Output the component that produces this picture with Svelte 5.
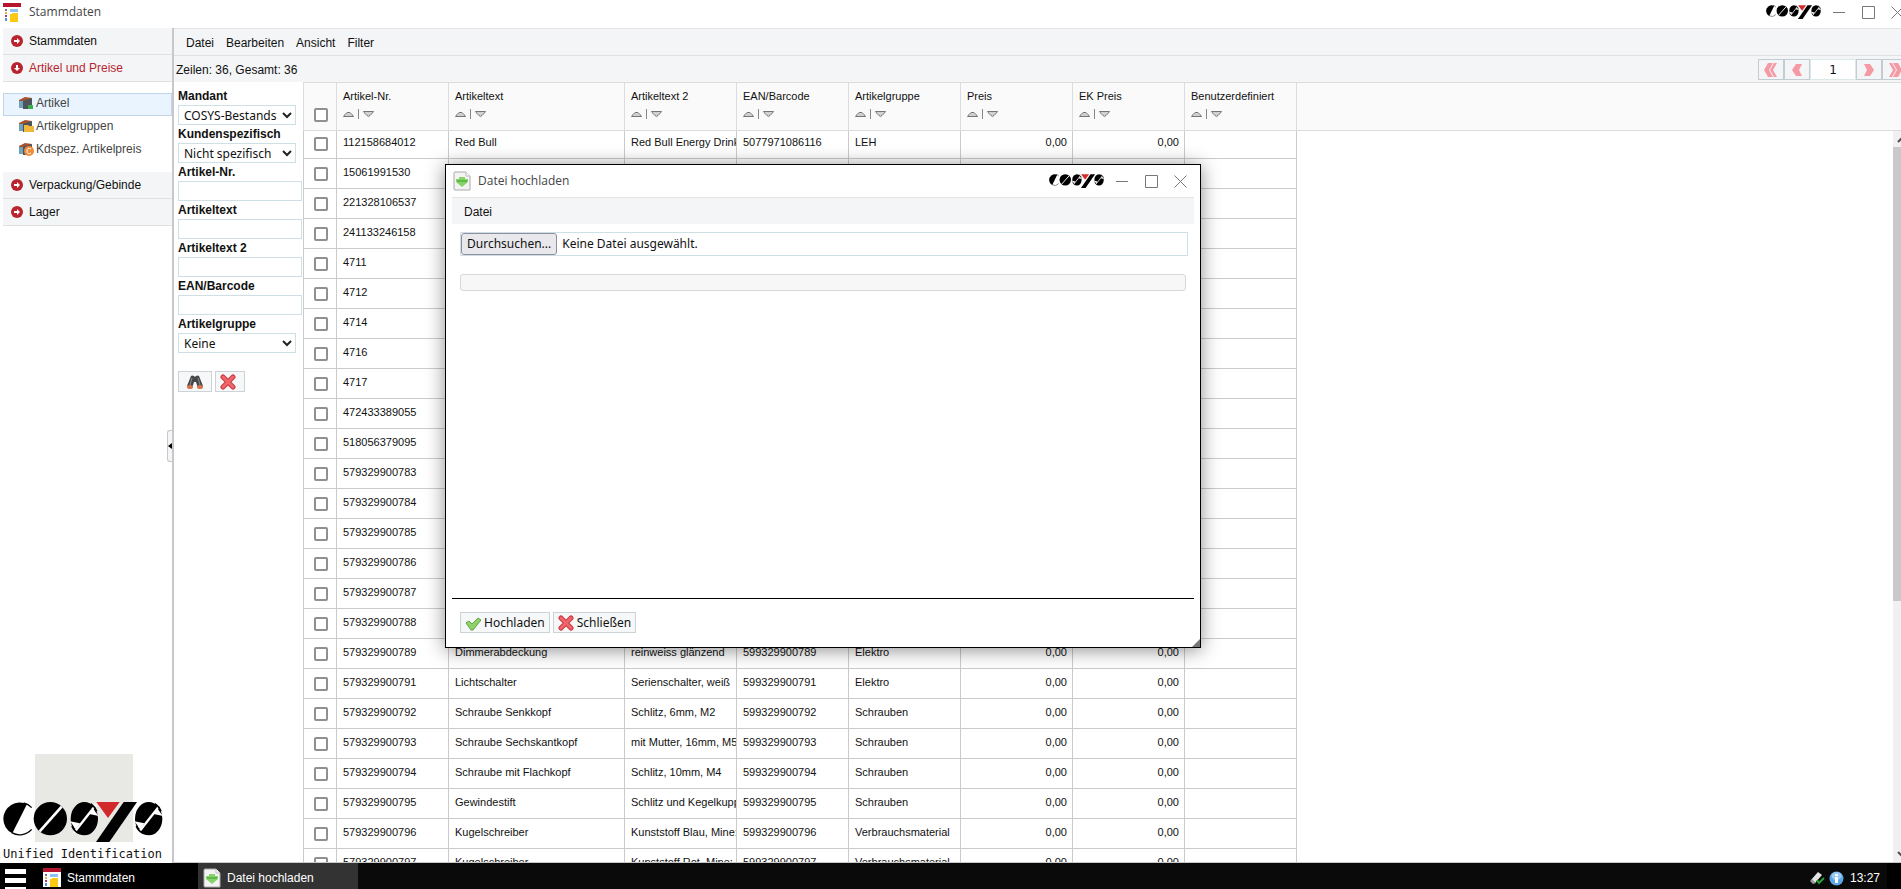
<script>
  const sections = [
    { label: "Stammdaten" },
    {
      label: "Artikel und Preise",
      open: true,
      items: [
        { label: "Artikel", kind: "box", selected: true },
        { label: "Artikelgruppen", kind: "folder" },
        { label: "Kdspez. Artikelpreis", kind: "price" },
      ],
    },
    { label: "Verpackung/Gebinde" },
    { label: "Lager" },
  ];

  const menu = ["Datei", "Bearbeiten", "Ansicht", "Filter"];

  const filters = [
    { id: "mandant", label: "Mandant", options: ["COSYS-Bestandsführung"] },
    { id: "kunde", label: "Kundenspezifisch", options: ["Nicht spezifisch"] },
    { id: "nr", label: "Artikel-Nr." },
    { id: "text", label: "Artikeltext" },
    { id: "text2", label: "Artikeltext 2" },
    { id: "ean", label: "EAN/Barcode" },
    { id: "gruppe", label: "Artikelgruppe", options: ["Keine"] },
  ];

  const columns = [
    { key: "nr", label: "Artikel-Nr." },
    { key: "text", label: "Artikeltext", wide: true },
    { key: "text2", label: "Artikeltext 2" },
    { key: "ean", label: "EAN/Barcode" },
    { key: "group", label: "Artikelgruppe" },
    { key: "price", label: "Preis", number: true },
    { key: "ekPrice", label: "EK Preis", number: true },
    { key: "custom", label: "Benutzerdefiniert" },
  ];

  const rows = [
    ["112158684012", "Red Bull", "Red Bull Energy Drink", "5077971086116", "LEH"],
    ["15061991530"],
    ["221328106537"],
    ["241133246158"],
    ["4711"],
    ["4712"],
    ["4714"],
    ["4716"],
    ["4717"],
    ["472433389055"],
    ["518056379095"],
    ["579329900783"],
    ["579329900784"],
    ["579329900785"],
    ["579329900786"],
    ["579329900787"],
    ["579329900788"],
    ["579329900789", "Dimmerabdeckung", "reinweiss glänzend", "599329900789", "Elektro"],
    ["579329900791", "Lichtschalter", "Serienschalter, weiß", "599329900791", "Elektro"],
    ["579329900792", "Schraube Senkkopf", "Schlitz, 6mm, M2", "599329900792", "Schrauben"],
    ["579329900793", "Schraube Sechskantkopf", "mit Mutter, 16mm, M5", "599329900793", "Schrauben"],
    ["579329900794", "Schraube mit Flachkopf", "Schlitz, 10mm, M4", "599329900794", "Schrauben"],
    ["579329900795", "Gewindestift", "Schlitz und Kegelkupp", "599329900795", "Schrauben"],
    ["579329900796", "Kugelschreiber", "Kunststoff Blau, Mine:", "599329900796", "Verbrauchsmaterial"],
    ["579329900797", "Kugelschreiber", "Kunststoff Rot, Mine:", "599329900797", "Verbrauchsmaterial"],
  ].map(([nr, text = "", text2 = "", ean = "", group = ""]) => ({
    nr, text, text2, ean, group, price: "0,00", ekPrice: "0,00", custom: "",
  }));

  let fileName = $state("Keine Datei ausgewählt.");
  let page = $state("1");

  function pickFile(event) {
    fileName = event.target.files[0]?.name ?? "Keine Datei ausgewählt.";
  }
</script>

{#snippet letterS(x)}
  <g transform="translate({x} 0)">
    <ellipse cx="41" cy="50" rx="41" ry="50" />
    <path d="M76 8 L10 92" stroke="#fff" stroke-width="7" />
    <path d="M-2 58 L28 64 L16 82 Q10 78 7 70z" fill="#fff" />
    <path d="M84 42 L56 36 L66 20 Q72 24 75 31z" fill="#fff" />
    <path d="M4 72 Q9 86 24 94 M78 28 Q73 14 60 5" fill="none" stroke="#000" stroke-width="5" />
  </g>
{/snippet}

{#snippet logo()}
  <svg class="logo" viewBox="0 0 480 120" role="img" aria-label="COSYS">
    <path d="M72 6 A50 50 0 0 0 1 50 A50 50 0 0 0 28 94z" />
    <path d="M26 92 A48 48 0 0 0 86 82 M62 3 Q76 6 86 17" fill="none" stroke="#000" stroke-width="4" />
    <ellipse cx="142" cy="50" rx="50" ry="50" />
    <path d="M176 14 L110 88" stroke="#fff" stroke-width="8" />
    {@render letterS(203)}
    <path d="M280 0 H350 L315 48z" fill="#d22a2c" />
    <path d="M362 0 H402 L319 120 H279z" />
    {@render letterS(396)}
  </svg>
{/snippet}

{#snippet appIcon()}
  <svg width="18" height="19" viewBox="0 0 18 19" aria-hidden="true">
    <path d="M0 0h18v19H0z" fill="#fff" />
    <path d="M0 0h18v4H0z" fill="#b5152f" />
    <path d="M2 6h2v2H2z" fill="#777" />
    <path d="M2 9h2v2H2z" fill="#e3b04b" />
    <path d="M2 12h2v2H2z" fill="#a33c6a" />
    <path d="M2 15h2v3H2z" fill="#5b8fd8" />
    <path d="M7 6h8v3H7z" fill="#8cc3f2" />
    <path d="M7 11h2V10h6v9H7z" fill="#fbc916" />
  </svg>
{/snippet}

{#snippet uploadIcon()}
  <svg width="18" height="20" viewBox="0 0 18 20" aria-hidden="true">
    <path d="M2 1h11l4 4v14H2a1 1 0 0 1-1-1V2a1 1 0 0 1 1-1z" fill="#f3f3f6" stroke="#aaa" />
    <path d="M13 1v4h4" fill="#fff" stroke="#bbb" />
    <path d="M6 6h6v2h3v3l-6 5-6-5V8h3z" fill="#86d36a" />
    <path d="M4 10h10" stroke="#5fb848" stroke-width="2" />
  </svg>
{/snippet}

{#snippet windowButtons()}
  <div class="window-buttons">
    {@render logo()}
    <button aria-label="Minimieren"><svg width="13" height="13"><path d="M0 6.5h12" /></svg></button>
    <button aria-label="Maximieren"><svg width="13" height="13"><path d="M.5.5h12v12H.5z" /></svg></button>
    <button aria-label="Fenster schließen"><svg width="13" height="13"><path d="M.5.5l12 12M12.5.5l-12 12" /></svg></button>
  </div>
{/snippet}

{#snippet crossIcon()}
  <svg width="16" height="16" viewBox="0 0 16 16" aria-hidden="true">
    <path d="M3 3 L13 13 M13 3 L3 13" stroke="#c8383e" stroke-width="5" stroke-linecap="round" />
    <path d="M3 3 L13 13 M13 3 L3 13" stroke="#f0656b" stroke-width="3" stroke-linecap="round" />
  </svg>
{/snippet}

{#snippet pagerArrow(double, flip)}
  <svg width="14" height="14" viewBox="0 0 14 14" class:flip aria-hidden="true">
    {#if double}
      <path d="M4 0h5L5 7l4 7H4L0 7z M10 0h3L9 7l4 7h-3L6 7z" />
    {:else}
      <path d="M6 1h6L9 7l3 6H6L2 7z" />
    {/if}
  </svg>
{/snippet}

<div class="screen">
  <div class="desktop">
    <header class="titlebar">
      {@render appIcon()}
      <span class="title">Stammdaten</span>
      {@render windowButtons()}
    </header>

    <div class="workspace">
      <aside class="sidebar">
        <nav>
          {#each sections as section}
            <button class="section" class:open={section.open}>
              <svg width="12" height="12" viewBox="0 0 12 12" aria-hidden="true">
                <circle cx="6" cy="6" r="6" fill="#b9252f" />
                {#if section.open}
                  <path d="M5 3h2v3h2L6 9 3 6h2z" fill="#fff" />
                {:else}
                  <path d="M3 5h3V3l3 3-3 3V7H3z" fill="#fff" />
                {/if}
              </svg>
              {section.label}
            </button>
            {#if section.items}
              <div class="section-items">
                {#each section.items as item}
                  <a href="#{item.kind}" class="entry" class:selected={item.selected}>
                    <svg width="15" height="14" viewBox="0 0 15 14" aria-hidden="true">
                      <path d="M0 4 L6 1 13 2 9 6 0 7z" fill="#a5532f" />
                      <path d="M0 5h4v7H0z" fill="#6fa3bd" />
                      <path d="M4 5l9-3v11H4z" fill="#4d555b" />
                      {#if item.kind === "box"}
                        <path d="M9 9h5v4H9z" fill="#35b14a" />
                      {:else if item.kind === "folder"}
                        <path d="M5 6h4l1 1h5v6H5z" fill="#f0b73c" />
                      {:else}
                        <circle cx="10" cy="9" r="5" fill="#f08a35" />
                        <path d="M12 7q-4-2-4 2t4 2" fill="none" stroke="#fff" />
                      {/if}
                    </svg>
                    {item.label}
                  </a>
                {/each}
              </div>
            {/if}
          {/each}
        </nav>
        <button class="collapse" aria-label="Navigation einklappen">
          <svg width="4" height="6"><path d="M4 0v6L0 3z" /></svg>
        </button>
        <div class="brand">
          {@render logo()}
          <span>Unified Identification</span>
        </div>
      </aside>

      <main>
        <div class="menubar">
          {#each menu as entry}
            <button>{entry}</button>
          {/each}
        </div>

        <div class="infobar">
          <span>Zeilen: 36, Gesamt: 36</span>
          <div class="pager">
            <button aria-label="Erste Seite">{@render pagerArrow(true, false)}</button>
            <button aria-label="Vorherige Seite">{@render pagerArrow(false, false)}</button>
            <input type="text" aria-label="Seite" bind:value={page} />
            <button aria-label="Nächste Seite">{@render pagerArrow(false, true)}</button>
            <button aria-label="Letzte Seite">{@render pagerArrow(true, true)}</button>
          </div>
        </div>

        <div class="content">
          <form class="filters">
            {#each filters as filter}
              <label for={filter.id}>{filter.label}</label>
              {#if filter.options}
                <div class="select">
                  <select id={filter.id}>
                    {#each filter.options as option}
                      <option>{option}</option>
                    {/each}
                  </select>
                  <svg width="10" height="7" viewBox="0 0 10 7" aria-hidden="true">
                    <path d="M1 1l4 4 4-4" />
                  </svg>
                </div>
              {:else}
                <input type="text" id={filter.id} />
              {/if}
            {/each}
            <div class="filter-actions">
              <button type="button" class="search" aria-label="Suchen">
                <svg width="16" height="16" viewBox="0 0 16 16" aria-hidden="true">
                  <path d="M4 2Q5 1 7 2L8 3 9 2q2-1 3 0l4 10-5 2-2-6H7l-2 6-5-2z" fill="#454648" />
                  <path d="M5 4L3 11M11 4l2 7" stroke="#8d8f92" />
                  <ellipse cx="3" cy="13" rx="3" ry="2" fill="#d9734f" />
                  <ellipse cx="13" cy="13" rx="3" ry="2" fill="#d9734f" />
                </svg>
              </button>
              <button type="button" class="reset" aria-label="Filter löschen">{@render crossIcon()}</button>
            </div>
          </form>

          <div class="grid">
            <table>
              <colgroup>
                <col class="col-check" />
                {#each columns as column}
                  <col class={column.wide ? "col-wide" : "col-normal"} />
                {/each}
                <col />
              </colgroup>
              <thead>
                <tr>
                  <th class="check"><input type="checkbox" aria-label="Alle auswählen" /></th>
                  {#each columns as column}
                    <th>
                      {column.label}
                      <div class="sort">
                        <button aria-label="{column.label} aufsteigend">
                          <svg width="11" height="6"><path d="M.5 5.5L2 3.5 4 1.5h3l2 2 1.5 2z" /></svg>
                        </button>
                        <i></i>
                        <button aria-label="{column.label} absteigend">
                          <svg width="11" height="6"><path d="M.5.5h10L9 2.5l-2 2-1.500 1-1.500-1-2-2z" /></svg>
                        </button>
                      </div>
                    </th>
                  {/each}
                  <th class="filler"></th>
                </tr>
              </thead>
              <tbody>
                {#each rows as row}
                  <tr>
                    <td class="check"><input type="checkbox" aria-label="Artikel {row.nr} auswählen" /></td>
                    {#each columns as column}
                      <td class:number={column.number}>{row[column.key]}</td>
                    {/each}
                    <td class="filler"></td>
                  </tr>
                {/each}
              </tbody>
            </table>
          </div>

          <div class="scrollbar">
            <div class="scroll-head"></div>
            <div class="arrow"><svg width="10" height="7"><path d="M1 6l4-4 4 4" /></svg></div>
            <div class="track"><div class="thumb"></div></div>
            <div class="arrow"><svg width="10" height="7"><path d="M1 1l4 4 4-4" /></svg></div>
          </div>
        </div>
      </main>
    </div>

    <footer class="taskbar">
      <button class="start" aria-label="Menü"><i></i><i></i><i></i></button>
      <button class="task">{@render appIcon()}Stammdaten</button>
      <button class="task active">{@render uploadIcon()}Datei hochladen</button>
      <div class="tray">
        <svg width="15" height="14" viewBox="0 0 15 14" aria-hidden="true">
          <path d="M1 9L8 1l4 3-7 8z" fill="#e4e4e4" />
          <path d="M0 10l3 3 3-1-4-4z" fill="#9a9a9a" />
          <path d="M7 9l2 3 5-5" fill="none" stroke="#28a532" stroke-width="2" />
        </svg>
        <svg width="15" height="15" viewBox="0 0 15 15" aria-hidden="true">
          <circle cx="7.500" cy="7.500" r="7" fill="#5ea7e6" />
          <ellipse cx="7.500" cy="5" rx="5" ry="4" fill="#9bcbf4" />
          <path d="M6 3h3v2H6zM6 6h3v6H6z" fill="#fff" />
        </svg>
        <span class="clock">13:27</span>
      </div>
      <button class="show-desktop" aria-label="Desktop anzeigen"></button>
    </footer>

    <div class="dialog" role="dialog" aria-label="Datei hochladen">
      <div class="dialog-title">
        {@render uploadIcon()}
        <span class="title">Datei hochladen</span>
        {@render windowButtons()}
      </div>
      <div class="menubar"><button>Datei</button></div>
      <div class="dialog-body">
        <div class="file-field">
          <input type="file" id="upload" onchange={pickFile} />
          <label for="upload">Durchsuchen...</label>
          <span>{fileName}</span>
        </div>
        <div class="progress" role="progressbar" aria-label="Fortschritt" aria-valuenow="0"></div>
      </div>
      <div class="dialog-footer">
        <button>
          <svg width="16" height="16" viewBox="0 0 16 16" aria-hidden="true">
            <path d="M1 8l3-2 3 3 6-6 3 2-8 10H6z" fill="#8ed168" stroke="#5fa648" />
          </svg>
          Hochladen
        </button>
        <button>{@render crossIcon()}Schließen</button>
      </div>
      <svg class="grip" width="8" height="8"><path d="M8 0v8H0z" /></svg>
    </div>
  </div>
</div>

<style>
  :global(body) {
    margin: 0;
  }

  .screen {
    height: 100vh;
    overflow: hidden;
    font: 12px/16px "Liberation Sans", Arial, sans-serif;
    color: #111;
    background: #fff;
  }

  /* the window is slightly wider than the viewport */
  .desktop {
    position: relative;
    display: flex;
    flex-direction: column;
    width: calc(100% + 9px);
    height: 100%;
  }

  .screen :global(*) {
    box-sizing: border-box;
  }

  button,
  input,
  select {
    margin: 0;
    padding: 0;
    font: inherit;
    color: inherit;
    border: 0;
    border-radius: 0;
    background: none;
  }

  svg {
    display: block;
    flex: none;
  }

  .titlebar {
    display: flex;
    align-items: center;
    gap: 8px;
    flex: none;
    height: 28px;
    padding: 0 6px 4px 3px;
  }

  .title {
    flex: 1;
    font-family: "Open Sans", "Noto Sans", sans-serif;
    color: #444;
  }

  .window-buttons {
    display: flex;
    align-items: center;
    gap: 16px;
  }

  .window-buttons .logo {
    width: 55px;
    height: 14px;
    margin-right: -4px;
  }

  .window-buttons button path {
    fill: none;
    stroke: #777;
  }

  .workspace {
    display: flex;
    flex: 1;
    min-height: 0;
  }

  .sidebar {
    position: relative;
    display: flex;
    flex-direction: column;
    flex: none;
    width: 174px;
    border-right: 2px solid #c8c8ca;
  }

  nav {
    flex: 1;
    padding-left: 3px;
  }

  .section {
    display: flex;
    align-items: center;
    gap: 6px;
    width: 100%;
    height: 27px;
    padding-left: 8px;
    background: #f4f5f7;
    border-bottom: 1px solid #e0e1e3;
  }

  .section.open {
    color: #b9252f;
  }

  .section-items {
    padding: 11px 0 10px;
  }

  .entry {
    display: flex;
    align-items: center;
    gap: 2px;
    height: 23px;
    padding: 0 0 3px 15px;
    border: 1px solid transparent;
    color: #444;
    text-decoration: none;
  }

  .entry.selected {
    background: #eaf4ff;
    border-color: #c0d5e8;
  }

  .collapse {
    position: absolute;
    top: 50%;
    right: 0;
    display: flex;
    align-items: center;
    width: 5px;
    height: 32px;
    border: 1px solid #c8c8ca;
    border-right: 0;
    border-radius: 3px 0 0 3px;
    background: #f4f5f7;
    transform: translateY(-50%);
  }

  .brand {
    display: flex;
    flex-direction: column;
    padding: 48px 0 0 3px;
    background: linear-gradient(#e8e8e4, #e8e8e4) 35px 0 / 98px 88px no-repeat;
  }

  .brand .logo {
    width: 160px;
    height: 40px;
  }

  .brand span {
    padding: 4px 0 1px;
    font-family: "DejaVu Sans Mono", monospace;
    white-space: nowrap;
  }

  main {
    display: flex;
    flex-direction: column;
    flex: 1;
    min-width: 0;
    border-bottom: 1px solid #c8c8c8;
  }

  .menubar {
    display: flex;
    align-items: center;
    gap: 12px;
    flex: none;
    height: 27px;
    padding: 2px 0 0 12px;
    background: #f4f5f7;
    border-top: 1px solid #e4e4e6;
  }

  .infobar {
    display: flex;
    align-items: center;
    justify-content: space-between;
    flex: none;
    height: 27px;
    padding: 1px 2px 0;
    background: #f4f5f7;
    border-top: 1px solid #e0e1e3;
  }

  .pager {
    display: flex;
    height: 21px;
  }

  .pager button {
    display: flex;
    align-items: center;
    justify-content: center;
    width: 26px;
    border: 1px solid #c3ccd2;
  }

  .pager svg {
    fill: #f59aa4;
  }

  .pager .flip {
    transform: scaleX(-1);
  }

  .pager input {
    width: 46px;
    text-align: center;
    font-family: "DejaVu Sans", sans-serif;
    background: #fff;
    border: 1px solid #dce8ea;
  }

  .content {
    display: flex;
    flex: 1;
    min-height: 0;
    overflow: hidden;
  }

  .filters {
    display: flex;
    flex-direction: column;
    flex: none;
    width: 129px;
    padding: 5px 1px 0 4px;
    font-family: "Noto Sans", sans-serif;
  }

  .filters label {
    font: bold 12px/18px "Liberation Sans", Arial, sans-serif;
  }

  .filters input,
  .filters select {
    width: 100%;
    height: 20px;
    padding: 1px 5px 0;
    border: 1px solid #cfdfe6;
    background: #fff;
  }

  .select {
    display: grid;
    align-items: center;
    margin-right: 6px;
  }

  .filters .select select {
    grid-area: 1 / 1;
    appearance: none;
    padding-right: 18px;
  }

  .select svg {
    grid-area: 1 / 1;
    justify-self: end;
    margin-right: 4px;
    pointer-events: none;
    fill: none;
    stroke: #222;
    stroke-width: 2;
  }

  .filter-actions {
    display: flex;
    gap: 3px;
    margin-top: 18px;
  }

  .filter-actions button,
  .dialog-footer button {
    display: flex;
    align-items: center;
    justify-content: center;
    gap: 3px;
    height: 21px;
    background: #f6f7f8;
    border: 1px solid #ccd3d6;
  }

  .filter-actions .search {
    width: 34px;
  }

  .filter-actions .reset {
    width: 30px;
    padding-right: 4px;
  }

  .grid {
    flex: 1;
    min-width: 0;
    overflow: hidden;
  }

  table {
    width: 100%;
    table-layout: fixed;
    border-spacing: 0;
    font-size: 11px;
  }

  .col-check {
    width: 34px;
  }

  .col-normal {
    width: 112px;
  }

  .col-wide {
    width: 176px;
  }

  th {
    height: 49px;
    padding: 5px 0 0 6px;
    font-weight: normal;
    text-align: left;
    vertical-align: top;
    background: #fafafa;
    border: 0 solid #dcdcdc;
    border-width: 1px 1px 1px 0;
  }

  td {
    height: 30px;
    padding: 0 0 8px 6px;
    line-height: 16px;
    vertical-align: bottom;
    white-space: nowrap;
    overflow: hidden;
    border: 0 solid #cbcbcb;
    border-width: 0 1px 1px 0;
  }

  tbody tr:first-child td {
    height: 28px;
  }

  td.number {
    padding-right: 5px;
    text-align: right;
  }

  .check {
    padding: 0 0 7px 1px;
    text-align: center;
    vertical-align: bottom;
    border-left-width: 1px;
  }

  td.filler {
    border: 0;
  }

  th.filler {
    border-right: 0;
  }

  input[type="checkbox"] {
    display: block;
    width: 14px;
    height: 14px;
    margin: 0 auto;
    appearance: none;
    border: 2px solid #8f8f94;
    border-radius: 2px;
    background: #fff;
  }

  th input[type="checkbox"] {
    margin-bottom: 1px;
  }

  input[type="checkbox"]:checked {
    background: #0060df;
  }

  .sort {
    display: flex;
    align-items: center;
    gap: 4px;
    height: 14px;
    margin-top: 3px;
  }

  .sort path {
    fill: #d0d0d0;
    stroke: #777;
  }

  .sort i {
    width: 1px;
    height: 10px;
    background: #888;
  }

  .scrollbar {
    display: flex;
    flex-direction: column;
    flex: none;
    width: 17px;
    background: #f0f0f0;
  }

  .scroll-head {
    height: 49px;
    background: #fafafa;
    border: 0 solid #dcdcdc;
    border-width: 1px 0;
  }

  .arrow {
    display: grid;
    place-items: center;
    height: 16px;
  }

  .arrow path {
    fill: none;
    stroke: #505050;
    stroke-width: 2;
  }

  .track {
    flex: 1;
  }

  .thumb {
    height: 65%;
    background: #c9c9c9;
  }

  .taskbar {
    display: flex;
    flex: none;
    height: 26px;
    overflow: hidden;
    color: #fff;
    background: #0a0a0a;
  }

  .start {
    display: flex;
    flex-direction: column;
    justify-content: flex-start;
    gap: 4px;
    width: 38px;
    padding: 6px 12px 0 5px;
    background: #000;
  }

  .start i {
    flex: none;
    height: 5px;
    background: #fff;
  }

  .task {
    display: flex;
    align-items: center;
    gap: 6px;
    width: 160px;
    padding: 3px 5px 0;
    background: #000;
  }

  .task.active {
    background: #333;
  }

  .tray {
    display: flex;
    align-items: center;
    gap: 4px;
    margin-left: auto;
    padding: 4px 7px 0 0;
  }

  .clock {
    margin-left: 2px;
  }

  .show-desktop {
    width: 23px;
    background: #000;
  }

  .dialog {
    position: absolute;
    top: 164px;
    left: 445px;
    display: flex;
    flex-direction: column;
    width: 756px;
    height: 484px;
    padding: 0 6px;
    background: #fff;
    border: 1px solid #000;
    box-shadow: 0 2px 18px rgba(0, 0, 0, 0.45);
  }

  .dialog-title {
    display: flex;
    align-items: center;
    gap: 7px;
    height: 32px;
    padding: 0 7px 0 1px;
  }

  .dialog-body {
    flex: 1;
    padding: 8px 6px 0 8px;
    border-bottom: 1px solid #000;
    font-family: "Noto Sans", sans-serif;
  }

  .file-field {
    display: flex;
    align-items: center;
    gap: 5px;
    height: 24px;
    border: 1px solid #cfdfe6;
  }

  .file-field input {
    position: absolute;
    width: 1px;
    height: 1px;
    opacity: 0;
  }

  .file-field label {
    padding: 2px 5px;
    background: #e9e9ed;
    border: 1px solid #8f8f9d;
    border-radius: 3px;
  }

  .progress {
    height: 17px;
    margin: 18px 2px 0 0;
    background: #f7f7f7;
    border: 1px solid #d8d8d8;
    border-radius: 3px;
  }

  .dialog-footer {
    display: flex;
    gap: 3px;
    padding: 13px 8px 14px;
    font-family: "Noto Sans", sans-serif;
  }

  .dialog-footer button {
    padding: 0 4px;
  }

  .grip {
    position: absolute;
    right: 0;
    bottom: 0;
    fill: #777;
  }
</style>
